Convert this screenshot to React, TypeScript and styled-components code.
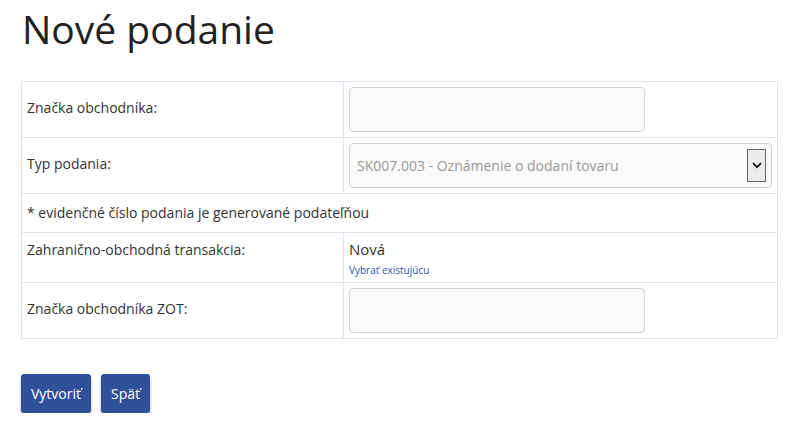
import React from "react";
import styled, { createGlobalStyle } from "styled-components";

const GlobalStyle = createGlobalStyle`
  html, body { margin: 0; padding: 0; background: #fff; }
  body { font-family: "Open Sans", "Noto Sans", sans-serif; color: #333; }
  * { box-sizing: border-box; }
`;

const Page = styled.div`
  padding: 0 21px;
`;

const Title = styled.h1`
  margin: 5px 0 28px 1px;
  font-size: 39px;
  font-weight: 400;
  line-height: 48px;
  color: #222;
`;

const FormTable = styled.table`
  width: 757px;
  border-collapse: collapse;
  table-layout: fixed;
`;

const Row = styled.tr``;

const Cell = styled.td<{ $top?: boolean; $w?: number }>`
  border: 1px solid #dde5f3;
  padding: 5px;
  font-size: 14px;
  line-height: 21px;
  color: #333;
  vertical-align: ${(p) => (p.$top ? "top" : "middle")};
  width: ${(p) => (p.$w ? `${p.$w}px` : "auto")};
`;

const LabelText = styled.div<{ $shift?: number }>`
  margin-top: ${(p) => p.$shift ?? 0}px;
`;

const NoteCell = styled(Cell)`
  padding: 8px 5px 9px 5px;
`;

const TextInput = styled.div<{ $w: number }>`
  width: ${(p) => p.$w}px;
  height: 45px;
  border: 1px solid #d4d4d4;
  border-radius: 4px;
  background: #fafafa;
`;

const SelectBox = styled.div`
  display: flex;
  align-items: center;
  justify-content: space-between;
  height: 45px;
  padding: 0 5px 0 7px;
  border: 1px solid #d4d4d4;
  border-radius: 4px;
  background: #fafafa;
  color: #999;
  font-size: 14px;
`;

const ArrowBox = styled.span`
  display: flex;
  align-items: center;
  justify-content: center;
  width: 19px;
  height: 33px;
  border: 1px solid #666;
  background: #ececec;
`;

const ValueText = styled.div`
  font-size: 15px;
  line-height: 20px;
  color: #333;
  margin-top: 1px;
`;

const SmallLink = styled.a`
  display: block;
  margin-top: 4px;
  font-size: 10px;
  line-height: 14px;
  color: #2d53b6;
  text-decoration: none;
`;

const Actions = styled.div`
  display: flex;
  gap: 10px;
  margin-top: 35px;
`;

const Button = styled.button`
  height: 39px;
  padding: 0 10px;
  border: none;
  border-radius: 3px;
  background: #30519a;
  color: #fff;
  font-family: "Open Sans", "Noto Sans", sans-serif;
  font-size: 14px;
  box-shadow: 0 2px 3px rgba(0, 0, 0, 0.3);
  cursor: pointer;
`;

const Chevron = () => (
  <svg width="10" height="7" viewBox="0 0 10 7">
    <path d="M1 1.2 L5 5.2 L9 1.2" fill="none" stroke="#111" strokeWidth="1.8" />
  </svg>
);

export default function App() {
  return (
    <>
      <GlobalStyle />
      <Page>
        <Title>Nové podanie</Title>
        <FormTable>
          <tbody>
            <Row>
              <Cell $w={322}>
                <LabelText $shift={-4}>Značka obchodníka:</LabelText>
              </Cell>
              <Cell>
                <TextInput $w={296} />
              </Cell>
            </Row>
            <Row>
              <Cell>
                <LabelText $shift={-4}>Typ podania:</LabelText>
              </Cell>
              <Cell>
                <SelectBox>
                  <span>SK007.003 - Oznámenie o dodaní tovaru</span>
                  <ArrowBox>
                    <Chevron />
                  </ArrowBox>
                </SelectBox>
              </Cell>
            </Row>
            <Row>
              <NoteCell colSpan={2}>* evidenčné číslo podania je generované podateľňou</NoteCell>
            </Row>
            <Row>
              <Cell $top>
                <LabelText $shift={1}>Zahranično-obchodná transakcia:</LabelText>
              </Cell>
              <Cell $top>
                <ValueText>Nová</ValueText>
                <SmallLink href="#">Vybrať existujúcu</SmallLink>
              </Cell>
            </Row>
            <Row>
              <Cell>
                <LabelText $shift={-4}>Značka obchodníka ZOT:</LabelText>
              </Cell>
              <Cell>
                <TextInput $w={296} />
              </Cell>
            </Row>
          </tbody>
        </FormTable>
        <Actions>
          <Button>Vytvoriť</Button>
          <Button>Späť</Button>
        </Actions>
      </Page>
    </>
  );
}
